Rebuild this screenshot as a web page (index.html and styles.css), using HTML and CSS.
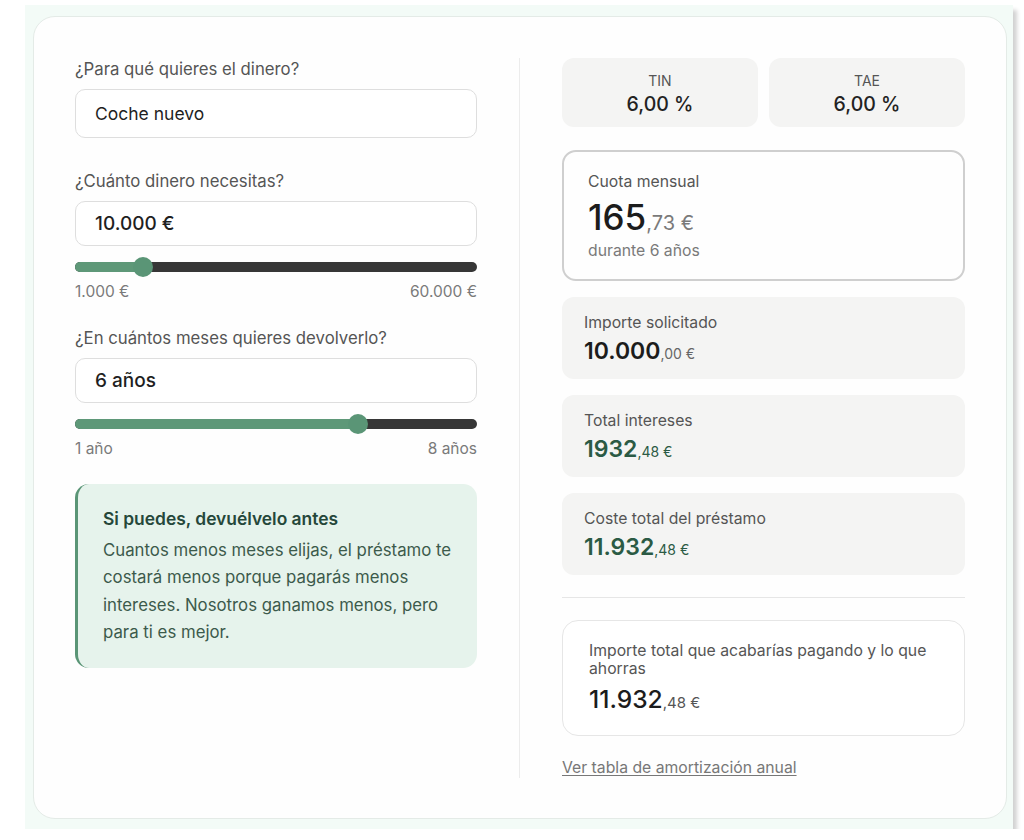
FILE: index.html
```html
<!DOCTYPE html>
<html lang="es">
  <head>
    <meta charset="UTF-8" />
    <title>Simulador de préstamo</title>
    <meta name="viewport" content="width=device-width, initial-scale=1.0" />
    <link rel="stylesheet" href="styles.css">
  </head>
  <body>
    <div class="frame">
      <div class="card">
        <div class="form">
          <label class="label">¿Para qué quieres el dinero?</label>
          <div class="input input-tall">Coche nuevo</div>

          <label class="label label-gap">¿Cuánto dinero necesitas?</label>
          <div class="input input-strong">10.000 €</div>
          <div class="slider" style="--pct: 0.1525">
            <div class="slider-fill"></div>
            <div class="slider-thumb"></div>
          </div>
          <div class="range-labels">
            <span>1.000 €</span>
            <span>60.000 €</span>
          </div>

          <label class="label label-gap-sm">¿En cuántos meses quieres devolverlo?</label>
          <div class="input input-strong">6 años</div>
          <div class="slider" style="--pct: 0.7143">
            <div class="slider-fill"></div>
            <div class="slider-thumb"></div>
          </div>
          <div class="range-labels">
            <span>1 año</span>
            <span>8 años</span>
          </div>

          <div class="tip">
            <p class="tip-title">Si puedes, devuélvelo antes</p>
            <p class="tip-text">Cuantos menos meses elijas, el préstamo te costará menos porque pagarás menos intereses. Nosotros ganamos menos, pero para ti es mejor.</p>
          </div>
        </div>

        <div class="divider"></div>

        <div class="results">
          <div class="rates">
            <div class="rate">
              <span class="rate-name">TIN</span>
              <span class="rate-value">6,00 %</span>
            </div>
            <div class="rate">
              <span class="rate-name">TAE</span>
              <span class="rate-value">6,00 %</span>
            </div>
          </div>

          <div class="quota">
            <p class="box-label">Cuota mensual</p>
            <p class="quota-value">165<small>,73 €</small></p>
            <p class="quota-note">durante 6 años</p>
          </div>

          <div class="stat">
            <p class="box-label">Importe solicitado</p>
            <p class="stat-value">10.000<small>,00 €</small></p>
          </div>
          <div class="stat">
            <p class="box-label">Total intereses</p>
            <p class="stat-value green">1932<small>,48 €</small></p>
          </div>
          <div class="stat">
            <p class="box-label">Coste total del préstamo</p>
            <p class="stat-value green">11.932<small>,48 €</small></p>
          </div>

          <hr class="rule" />

          <div class="total">
            <p class="total-label">Importe total que acabarías pagando y lo que ahorras</p>
            <p class="total-value">11.932<small>,48 €</small></p>
          </div>

          <a class="link" href="#">Ver tabla de amortización anual</a>
        </div>
      </div>
    </div>
  </body>
</html>
```

FILE: styles.css
```css
body {
  margin: 0;
  background-color: #fff;
  font-family: "Inter", "Noto Sans", sans-serif;
  color: #222;
}

p {
  margin: 0;
}

small {
  line-height: 1;
}

.frame {
  width: 974px;
  margin: 5px 0 0 25px;
  padding: 11px 6px 10px 8px;
  background-color: #f3fbf7;
  box-shadow: 4px 5px 4px rgba(0, 0, 0, 0.18);
}

.card {
  display: grid;
  grid-template-columns: 402px 1px 403px;
  column-gap: 42px;
  padding: 41px 41px 40px;
  background-color: #fefefe;
  border: 1px solid #e4ebe7;
  border-radius: 22px;
}

.divider {
  background-color: #ececec;
}

/* left side */

.label {
  display: block;
  font-size: 16.75px;
  line-height: 22px;
  color: #555;
  margin-bottom: 9px;
}

.label-gap {
  margin-top: 32px;
}

.label-gap-sm {
  margin-top: 26px;
}

.input {
  height: 43px;
  padding: 0 19px;
  display: flex;
  align-items: center;
  border: 1px solid #dedede;
  border-radius: 10px;
  background-color: #fff;
  font-size: 17.5px;
  color: #1f1f1f;
}

.input-tall {
  height: 47px;
}

.input-strong {
  font-size: 19px;
  font-weight: 500;
}

.slider {
  position: relative;
  height: 10px;
  margin-top: 16px;
  border-radius: 5px;
  background-color: #363636;
}

.slider-fill {
  width: calc(10px + var(--pct) * (100% - 20px));
  height: 100%;
  border-radius: 5px;
  background-color: #5e9878;
}

.slider-thumb {
  position: absolute;
  top: -5px;
  left: calc(var(--pct) * (100% - 20px));
  width: 20px;
  height: 20px;
  border-radius: 50%;
  background-color: #5a9576;
}

.range-labels {
  display: flex;
  justify-content: space-between;
  margin-top: 11px;
  font-size: 15.5px;
  line-height: 18px;
  color: #7a7a7a;
}

.tip {
  margin-top: 26px;
  padding: 24px 22px 21px 25px;
  background-color: #e6f3ec;
  border-left: 3px solid #5a9576;
  border-radius: 14px;
}

.tip-title {
  font-size: 17.4px;
  line-height: 22px;
  font-weight: 600;
  color: #25473a;
  margin-bottom: 7px;
}

.tip-text {
  font-size: 16.8px;
  line-height: 27.4px;
  color: #3c5a4b;
}

/* right side */

.results {
  display: flex;
  flex-direction: column;
  gap: 16px;
}

.rates {
  display: grid;
  grid-template-columns: 1fr 1fr;
  gap: 11px;
  margin-bottom: 7px;
}

.rate {
  display: flex;
  flex-direction: column;
  align-items: center;
  padding: 14px 0 10px;
  background-color: #f4f4f3;
  border-radius: 12px;
}

.rate-name {
  font-size: 14px;
  line-height: 18px;
  color: #555;
}

.rate-value {
  margin-top: 1px;
  font-size: 19.5px;
  line-height: 26px;
  font-weight: 500;
  color: #222;
}

.box-label {
  font-size: 15.75px;
  line-height: 20px;
  color: #555;
}

.quota {
  padding: 20px 24px 18px;
  border: 2px solid #cfcfcf;
  border-radius: 14px;
}

.quota-value {
  margin-top: 7px;
  font-size: 35px;
  line-height: 36px;
  font-weight: 500;
  color: #1c1c1c;
}

.quota-value small {
  font-size: 20px;
  font-weight: 400;
  color: #7a7a7a;
}

.quota-note {
  margin-top: 6px;
  font-size: 15.75px;
  line-height: 20px;
  color: #7a7a7a;
}

.stat {
  padding: 16px 22px 14px;
  background-color: #f4f4f3;
  border-radius: 12px;
}

.stat-value {
  margin-top: 4px;
  font-size: 23px;
  line-height: 28px;
  font-weight: 600;
  color: #1c1c1c;
}

.stat-value small {
  font-size: 14px;
  font-weight: 400;
  color: #666;
}

.stat-value.green {
  color: #2b5a44;
}

.stat-value.green small {
  color: #2b5a44;
}

.rule {
  margin: 6px 0;
  border: 0;
  border-top: 1px solid #e6e6e6;
}

.total {
  padding: 21px 26px;
  border: 1px solid #e6e6e6;
  border-radius: 16px;
  background-color: #fff;
}

.total-label {
  font-size: 15.75px;
  line-height: 18px;
  color: #555;
}

.total-value {
  margin-top: 6px;
  font-size: 24.6px;
  line-height: 30px;
  font-weight: 500;
  color: #1c1c1c;
}

.total-value small {
  font-size: 15px;
  font-weight: 400;
  color: #555;
}

.link {
  margin-top: 6px;
  font-size: 15.75px;
  line-height: 20px;
  color: #777;
  text-decoration: underline;
  text-underline-offset: 2px;
  align-self: flex-start;
}
```
